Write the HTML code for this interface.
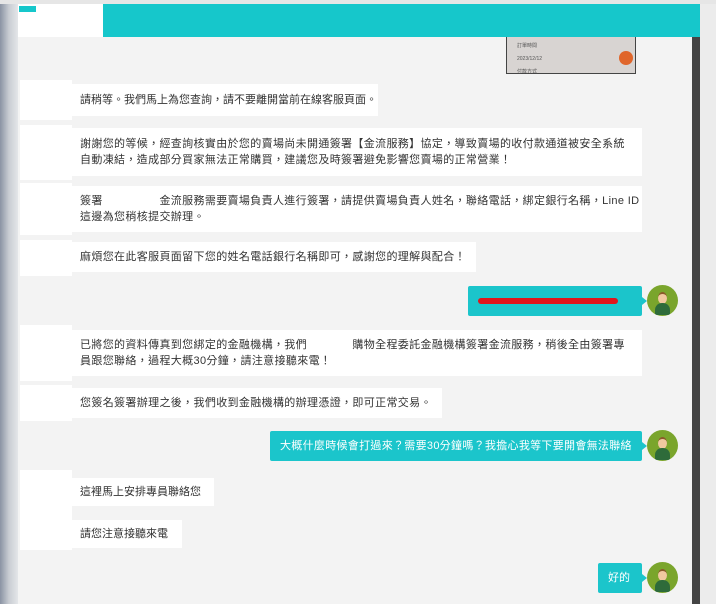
<html><head><style>
body{margin:0;width:716px;height:604px;position:relative;overflow:hidden;background:#f3f3f3;font-family:"Liberation Sans","Noto Sans CJK TC",sans-serif;font-size:11px;color:#333}
.a{position:absolute}
.av{position:absolute;left:20px;width:52px;background:#fff}
.b{position:absolute;left:72px;background:#fff;padding:0 8px;line-height:16px;display:flex;flex-direction:column;justify-content:center;white-space:nowrap;box-sizing:border-box}
.w{letter-spacing:0.35px}
.u{position:absolute;background:#1bc5cb;color:#fff;line-height:30px;height:30px;padding:0 10px;border-radius:2px;white-space:nowrap;box-sizing:border-box}
.u:after{content:"";position:absolute;right:-5px;top:11px;border-left:5px solid #1bc5cb;border-top:4px solid transparent;border-bottom:4px solid transparent}
.ua{position:absolute;left:647px;width:31px;height:31px;border-radius:50%;background:#7aa52c;overflow:hidden}
.ua:before{content:"";position:absolute;left:11px;top:7px;width:9px;height:10px;border-radius:50%;background:#f1c9a0;border-top:2px solid #8a5a2a}
.ua:after{content:"";position:absolute;left:8px;top:18px;width:15px;height:12px;border-radius:7px 7px 0 0;background:#2e6b3a}
</style></head><body>
<div class="a" style="left:0;top:0;width:18px;height:604px;background:linear-gradient(90deg,#8a93a3,#c9cdd3 50%,#e4e6e9)"></div>
<div class="a" style="left:700px;top:0;width:16px;height:604px;background:#ececec"></div>
<div class="a" style="left:692px;top:37px;width:8px;height:567px;background:#444"></div>
<div class="a" style="left:0;top:0;width:716px;height:4px;background:#e6e6e6"></div>
<div class="a" style="left:18px;top:4px;width:682px;height:33px;background:#16c7cb"></div>
<div class="a" style="left:18px;top:4px;width:85px;height:33px;background:#fff"></div>
<div class="a" style="left:19px;top:6px;width:17px;height:6px;background:#16c7cb"></div>
<div class="a" style="left:506px;top:37px;width:130px;height:37px;background:#d8d4d2;border:1px solid #444;border-top:0;box-sizing:border-box;font-size:5px;color:#555">
<div style="margin:5px 0 0 10px">訂單時間</div><div style="margin:7px 0 0 10px">2023/12/12</div><div style="margin:6px 0 0 10px">付款方式</div>
<div style="position:absolute;left:112px;top:14px;width:14px;height:14px;border-radius:50%;background:#e0662b"></div></div>

<div class="av" style="top:80px;height:40px"></div>
<div class="b" style="top:84px;height:32px;width:306px">請稍等。我們馬上為您查詢，請不要離開當前在線客服頁面。</div>
<div class="av" style="top:125px;height:55px"></div>
<div class="b w" style="top:128px;height:48px;width:570px">謝謝您的等候，經查詢核實由於您的賣場尚未開通簽署【金流服務】協定，導致賣場的收付款通道被安全系統<br>自動凍結，造成部分買家無法正常購買，建議您及時簽署避免影響您賣場的正常營業！</div>
<div class="av" style="top:183px;height:52px"></div>
<div class="b w" style="top:186px;height:46px;width:570px">簽署　　　　　金流服務需要賣場負責人進行簽署，請提供賣場負責人姓名，聯絡電話，綁定銀行名稱，Line ID<br>這邊為您稍核提交辦理。</div>
<div class="av" style="top:240px;height:36px"></div>
<div class="b w" style="top:242px;height:30px;width:404px">麻煩您在此客服頁面留下您的姓名電話銀行名稱即可，感謝您的理解與配合！</div>

<div class="u" style="left:468px;top:286px;width:174px"><div style="position:absolute;left:10px;top:12px;width:140px;height:6px;background:#e0161c;border-radius:3px"></div></div>
<div class="ua" style="top:285px"></div>

<div class="av" style="top:325px;height:56px"></div>
<div class="b w" style="top:330px;height:46px;width:570px">已將您的資料傳真到您綁定的金融機構，我們　　　　購物全程委託金融機構簽署金流服務，稍後全由簽署專<br>員跟您聯絡，過程大概30分鐘，請注意接聽來電！</div>
<div class="av" style="top:385px;height:36px"></div>
<div class="b w" style="top:388px;height:30px;width:370px">您簽名簽署辦理之後，我們收到金融機構的辦理憑證，即可正常交易。</div>

<div class="u" style="left:270px;top:431px;width:372px;letter-spacing:0.3px">大概什麼時候會打過來？需要30分鐘嗎？我擔心我等下要開會無法聯絡</div>
<div class="ua" style="top:430px"></div>

<div class="av" style="top:470px;height:80px"></div>
<div class="b" style="top:478px;height:28px;width:142px">這裡馬上安排專員聯絡您</div>
<div class="b" style="top:520px;height:28px;width:110px">請您注意接聽來電</div>

<div class="u" style="left:598px;top:563px;width:44px">好的</div>
<div class="ua" style="top:562px"></div>
</body></html>
